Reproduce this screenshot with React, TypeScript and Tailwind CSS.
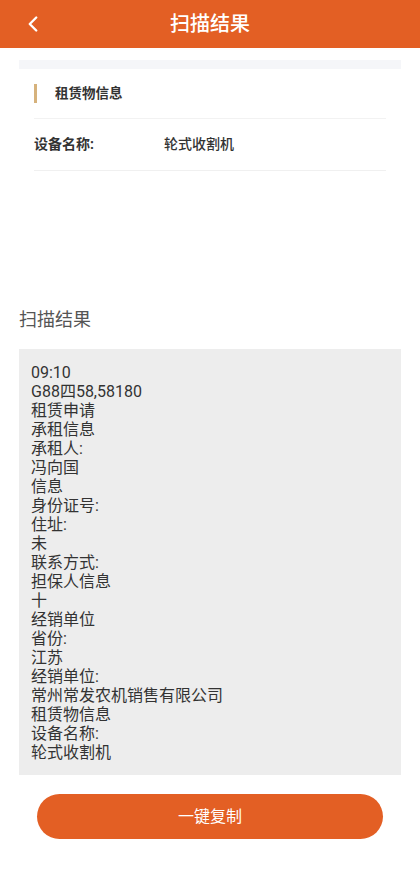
import { ChevronLeft } from 'lucide-react';

const lines = [
  '09:10',
  'G88四58,58180',
  '租赁申请',
  '承租信息',
  '承租人:',
  '冯向国',
  '信息',
  '身份证号:',
  '住址:',
  '未',
  '联系方式:',
  '担保人信息',
  '十',
  '经销单位',
  '省份:',
  '江苏',
  '经销单位:',
  '常州常发农机销售有限公司',
  '租赁物信息',
  '设备名称:',
  '轮式收割机',
];

const App = () => {
  return (
    <div
      className="w-[420px] min-h-[882px] bg-white"
      style={{ fontFamily: 'Roboto, "Noto Sans CJK SC", sans-serif' }}
    >
      <div className="h-[48px] bg-[#e35f24] flex items-center relative">
        <div className="w-[60px] pl-[20px] flex items-center">
          <ChevronLeft className="text-white" size={26} strokeWidth={2.2} />
        </div>
        <div className="flex-1 text-center text-white text-[20px] font-medium pr-[60px] leading-none">扫描结果</div>
      </div>

      <div className="px-[19px] pt-[12px]">
        <div className="h-[9px] bg-[#f5f6f9]"></div>
        <div className="px-[15px]">
          <div className="flex items-center h-[50px] border-b border-[#f2f2f2]">
            <div className="w-[3px] h-[19px] bg-[#d6b27c]"></div>
            <div className="ml-[18px] text-[13.5px] font-bold text-[#333]">租赁物信息</div>
          </div>
          <div className="flex items-center h-[52px] border-b border-[#f0f0f0] text-[14px] text-[#333]">
            <div className="w-[130px] font-bold">设备名称:</div>
            <div className="font-medium">轮式收割机</div>
          </div>
        </div>
      </div>

      <div className="px-[19px] pt-[140px]">
        <div className="text-[18px] text-[#555] leading-none">扫描结果</div>
        <div className="mt-[20px] bg-[#ededed] pl-[12px] pr-3 pt-[14px] pb-[13px] text-[16px] leading-[19px] text-[#333]">
          {lines.map((l, i) => (
            <div key={i}>{l}</div>
          ))}
        </div>
      </div>

      <div className="px-[37px] pt-[19px]">
        <button className="w-full h-[45px] rounded-full bg-[#e35f24] text-white text-[16px]">一键复制</button>
      </div>
    </div>
  );
};

export default App;
